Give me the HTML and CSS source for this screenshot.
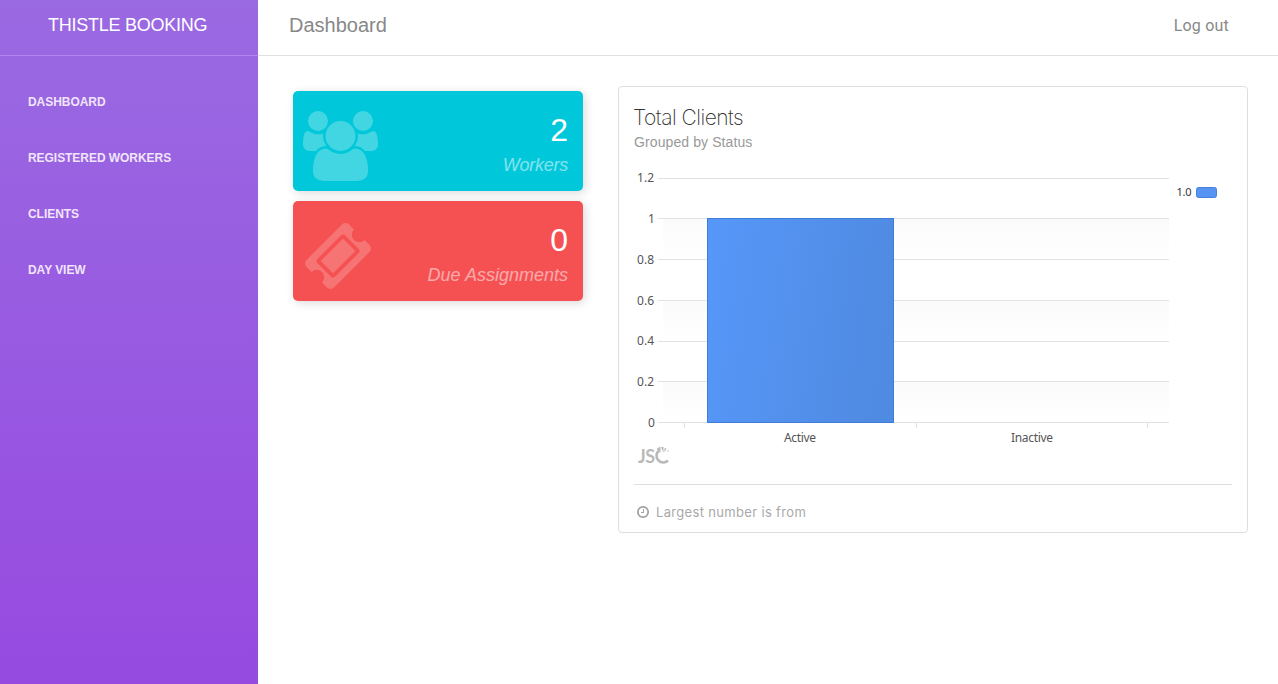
FILE: index.html
```
<!DOCTYPE html>
<html lang="en">
<head>
<meta charset="utf-8">
<title>Thistle Booking</title>
<link rel="stylesheet" href="styles.css">
</head>
<body>
<aside class="sidebar">
  <div class="brand"><span>THISTLE BOOKING</span></div>
  <nav class="menu">
    <a>DASHBOARD</a>
    <a>REGISTERED WORKERS</a>
    <a>CLIENTS</a>
    <a>DAY VIEW</a>
  </nav>
</aside>
<main class="main">
  <header class="topbar"><h1>Dashboard</h1><a class="logout">Log out</a></header>
  <div class="content">
    <section class="counters">
      <div class="counter cyan">
        <svg class="users" viewBox="0 0 1920 1792"><path d="M593 896q-162 5-265 128h-134q-82 0-138-40.500t-56-118.500q0-353 124-353 6 0 43.500 21t97.500 42.500 119 21.500q67 0 133-23-5 37-5 66 0 139 81 256zM1664 1533q0 120-73 189.500t-194 69.500h-874q-121 0-194-69.500t-73-189.500q0-53 3.500-103.500t14-109 26.500-108.500 43-97.500 62-81 85.500-53.500 111.500-20q10 0 43 21.500t73 48 107 48 135 21.500 135-21.500 107-48 73-48 43-21.500q61 0 111.500 20t85.500 53.500 62 81 43 97.500 26.500 108.500 14 109 3.500 103.500zM640 256q0 106-75 181t-181 75-181-75-75-181 75-181 181-75 181 75 75 181zM1344 640q0 159-112.500 271.500t-271.500 112.500-271.500-112.500-112.500-271.500 112.500-271.500 271.500-112.500 271.500 112.500 112.500 271.500zM1920 865q0 78-56 118.500t-138 40.500h-134q-103-123-265-128 81-117 81-256 0-29-5-66 66 23 133 23 59 0 119-21.500t97.500-42.500 43.500-21q124 0 124 353zM1792 256q0 106-75 181t-181 75-181-75-75-181 75-181 181-75 181 75 75 181z"/></svg>
        <div class="figures"><strong>2</strong><em class="narrow">Workers</em></div>
      </div>
      <div class="counter red">
        <svg class="ticket" viewBox="0 0 1792 1792"><path d="M1024 452l316 316-572 572-316-316zM813 1431l618-618q19-19 19-45t-19-45l-362-362q-18-18-45-18t-45 18l-618 618q-19 19-19 45t19 45l362 362q18 18 45 18t45-18zM1702 794l-907 908q-37 37-90.500 37t-90.500-37l-126-126q56-56 56-136t-56-136-136-56-136 56l-125-126q-37-37-37-90.500t37-90.500l907-906q37-37 90.500-37t90.500 37l125 125q-56 56-56 136t56 136 136 56 136-56l126 125q37 37 37 90.500t-37 90.500z"/></svg>
        <div class="figures"><strong>0</strong><em>Due Assignments</em></div>
      </div>
    </section>
    <section class="card">
      <h2>Total Clients</h2>
      <p class="subtitle">Grouped by Status</p>
      <svg class="chart" viewBox="0 0 598 310" width="598" height="310">
        <defs>
          <linearGradient id="bar" x1="0" x2="1" y1="0" y2="0.15"><stop offset="0" stop-color="#5697f8"/><stop offset="1" stop-color="#508be3"/></linearGradient>
          <linearGradient id="band" x1="0" x2="0" y1="0" y2="1"><stop offset="0" stop-color="#fbfbfb"/><stop offset="1" stop-color="#fff"/></linearGradient>
        </defs>
        <g fill="url(#band)">
          <rect x="29" y="45" width="506" height="40"/><rect x="29" y="127" width="506" height="40"/><rect x="29" y="208" width="506" height="40"/>
        </g>
        <path class="grid" d="M24 4.500H535M24 44.500H535M24 85.500H535M24 126.500H535M24 167.500H535M24 207.500H535M24 248.500H535M50.500 249v5M282.500 249v5M513.500 249v5"/>
        <rect x="73.500" y="44.500" width="186" height="204" fill="url(#bar)" stroke="#3f7cd6"/>
        <g class="axis">
          <text x="3" y="8" textLength="17">1.2</text>
          <text x="14" y="49">1</text>
          <text x="3" y="90" textLength="17">0.8</text>
          <text x="3" y="131" textLength="17">0.6</text>
          <text x="3" y="171" textLength="17">0.4</text>
          <text x="3" y="212" textLength="17">0.2</text>
          <text x="14" y="253">0</text>
          <text x="150" y="268" textLength="32">Active</text>
          <text x="377" y="268" textLength="42">Inactive</text>
        </g>
        <text class="legend" x="542.500" y="22" textLength="15">1.0</text>
        <rect x="562.500" y="13.500" width="20" height="10" rx="2" fill="#5594f3" stroke="#4581dc"/>
        <g class="mark">
          <text x="4" y="289" textLength="17">JS</text>
          <path d="M24.500 277a6 6 0 1 0 9.500 9.500" fill="none" stroke="#b9b9b9" stroke-width="2.600"/>
          <path d="M22.500 275l4-2.500v6.500zM27 273l2.500 0v6zM30.500 274l2 .5-2 4zM33.500 276l1.500 1-1.500 1z" fill="#b9b9b9"/>
        </g>
      </svg>
      <footer><svg class="clock" viewBox="0 0 1792 1792"><path d="M1024 544v448q0 14-9 23t-23 9h-320q-14 0-23-9t-9-23v-64q0-14 9-23t23-9h224v-352q0-14 9-23t23-9h64q14 0 23 9t9 23zM1440 896q0-148-73-273t-198-198-273-73-273 73-198 198-73 273 73 273 198 198 273 73 273-73 198-198 73-273zM1664 896q0 209-103 385.500t-279.500 279.500-385.500 103-385.500-103-279.500-279.500-103-385.500 103-385.500 279.500-279.500 385.500-103 385.500 103 279.500 279.500 103 385.500z"/></svg><span>Largest number is from</span></footer>
    </section>
  </div>
</main>
</body>
</html>
```
FILE: styles.css
```
* { box-sizing: border-box; }
body { margin: 0; height: 684px; display: flex; overflow: hidden; background: #fff; font-family: "Liberation Sans", Arial, sans-serif; }
h1, h2, p { margin: 0; font-weight: 400; }
.sidebar { width: 258px; background: linear-gradient(#9a6ae2, #964ae0); }
.brand { height: 56px; padding: 14px 0 0 48px; border-bottom: 1px solid #b184ee; color: #fff; font-size: 18px; line-height: 22px; }
.brand span { letter-spacing: -0.25px; }
.menu { display: flex; flex-direction: column; gap: 36px; padding: 36px 28px; }
.menu a { color: #f0e5fc; font-size: 12px; font-weight: 700; line-height: 20px; letter-spacing: -0.05px; }
.main { flex: 1; }
.topbar { height: 56px; display: flex; justify-content: space-between; padding: 13px 49px 0 31px; border-bottom: 1px solid #e0e0e0; color: #888; }
.topbar h1 { font-size: 20px; line-height: 25px; }
.logout { font: 16px/25px Roboto, sans-serif; letter-spacing: 0.2px; }
.content { display: flex; align-items: flex-start; gap: 35px; padding: 30px 30px 0 35px; }
.counters { width: 290px; display: flex; flex-direction: column; gap: 10px; padding-top: 5px; }
.counter { height: 100px; display: flex; justify-content: space-between; padding: 20px 15px 0 10px; border-radius: 5px; box-shadow: 2px 2px 10px #dadada; }
.cyan { background: #00c8da; }
.red { background: #f55153; }
.counter svg { fill: #fff; opacity: 0.26; }
.red svg { opacity: 0.2; }
.users { width: 75px; height: 70px; }
.ticket { width: 70px; height: 70px; }
.figures { display: flex; flex-direction: column; align-items: flex-end; color: #fff; }
.figures strong { font-size: 32px; font-weight: 400; line-height: 38px; }
.figures em { margin-top: 4px; font-size: 18px; line-height: 24px; opacity: 0.5; }
.figures .narrow { letter-spacing: -0.25px; }
.card { flex: 1; height: 447px; padding: 17px 15px 0; border: 1px solid #dedede; border-radius: 4px; }
.card h2 { margin-left: -1px; color: #333; font: 200 21px/28px Inter, sans-serif; letter-spacing: -0.5px; }
.subtitle { color: #999; font-size: 14px; line-height: 20px; letter-spacing: 0.1px; }
.chart { display: block; margin-top: 22px; overflow: visible; }
.grid { fill: none; stroke: #e2e2e2; }
.axis text { fill: #555; font: 12px "Noto Sans", sans-serif; }
.legend { fill: #333; font: 11px "Noto Sans", sans-serif; }
.mark text { fill: #b9b9b9; font: 700 18px Lato, sans-serif; }
.card footer { display: flex; align-items: center; gap: 6px; border-top: 1px solid #dedede; padding: 17px 0 0 2px; color: #a9a9a9; font: 13px/20px Inter, sans-serif; letter-spacing: 0.33px; }
.clock { width: 14px; height: 14px; fill: #a3a3a3; }
```
